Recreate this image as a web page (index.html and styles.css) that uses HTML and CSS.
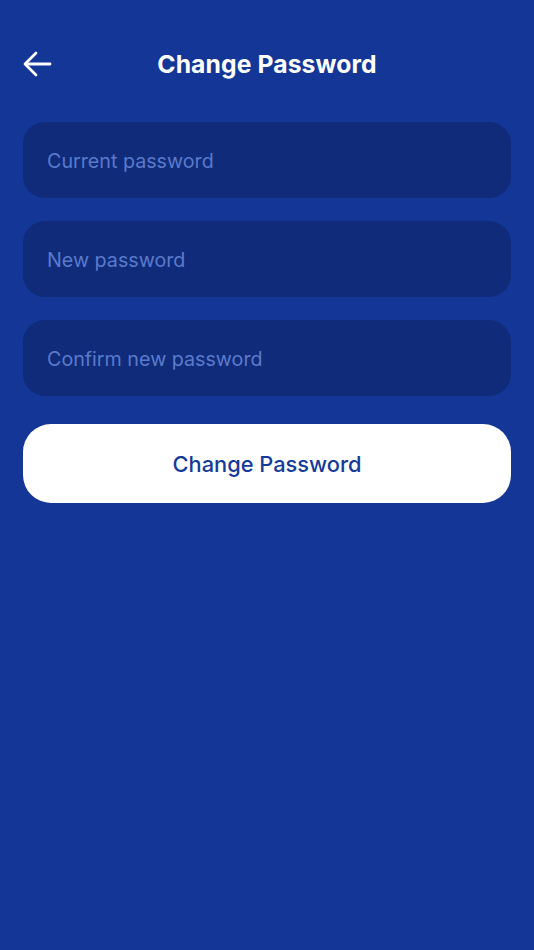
FILE: index.html
```html
<!DOCTYPE html>
<html lang="en">
  <head>
    <link rel="stylesheet" href="styles.css">
  </head>
  <body>
    <div class="top-bar">
      <button class="back-btn" aria-label="Back">
        <svg width="30" height="26" viewBox="0 0 30 26" fill="none" stroke="#fff" stroke-width="2.8" stroke-linecap="round" stroke-linejoin="round">
          <path d="M27 13H3"/>
          <path d="M13 2L2 13l11 11"/>
        </svg>
      </button>
      <p class="top-title">Change Password</p>
    </div>

    <form class="pass-form">
      <input class="pass-input" type="password" placeholder="Current password">
      <input class="pass-input" type="password" placeholder="New password">
      <input class="pass-input" type="password" placeholder="Confirm new password">
      <button type="button" class="submit-btn">Change Password</button>
    </form>
  </body>
</html>
```

FILE: styles.css
```css
body {
  margin: 0;
  padding: 0;
  min-height: 950px;
  background-color: #143696;
  font-family: Inter, "Noto Sans", sans-serif;
}

div.top-bar {
  position: relative;
  display: flex;
  justify-content: center;
  align-items: center;
  height: 64px;
  padding-top: 32px;
}

button.back-btn {
  position: absolute;
  left: 23px;
  top: 51px;
  padding: 0;
  border: none;
  background: none;
  cursor: pointer;
}

p.top-title {
  margin: 0;
  color: #fff;
  font-size: 24.7px;
  font-weight: 700;
  letter-spacing: 0.1px;
}

form.pass-form {
  display: flex;
  flex-direction: column;
  gap: 23px;
  padding: 26px 23px 0;
}

input.pass-input {
  box-sizing: border-box;
  height: 76px;
  padding: 2px 24px 0;
  border: none;
  border-radius: 22px;
  background-color: #0f2b7a;
  color: #fff;
  font-family: inherit;
  font-size: 19.7px;
  outline: none;
}

input.pass-input::placeholder {
  color: #5b7acb;
}

button.submit-btn {
  height: 79px;
  margin-top: 5px;
  border: none;
  border-radius: 28px;
  background-color: #fff;
  color: #153a99;
  font-family: inherit;
  font-size: 21.8px;
  font-weight: 500;
  cursor: pointer;
}
```
